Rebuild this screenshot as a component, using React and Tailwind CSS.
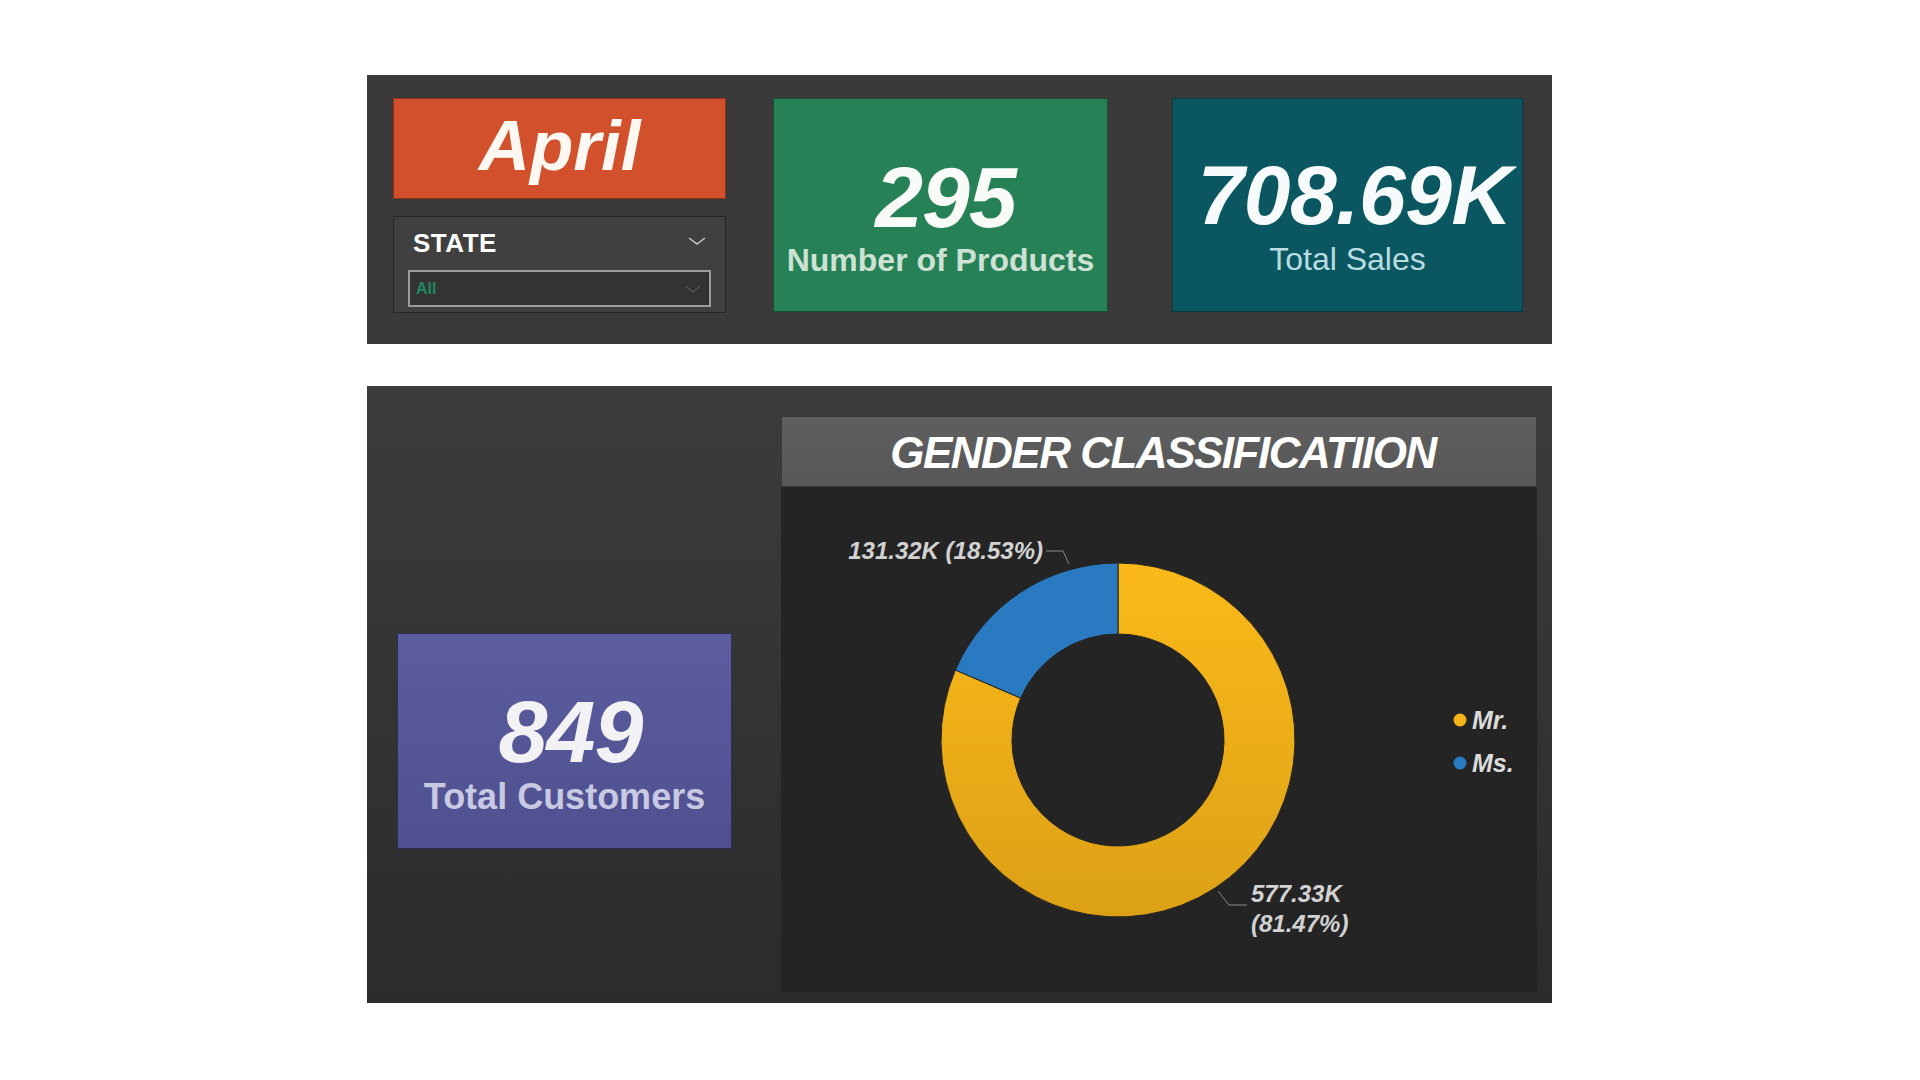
import React from "react";

const FONT = { fontFamily: '"Liberation Sans", Arial, sans-serif' };

// donut geometry (chart body coordinates)
const CX = 337;
const CY = 253;
const R_OUT = 177;
const R_IN = 106;

function polar(r, deg) {
  const a = (deg * Math.PI) / 180;
  return [CX + r * Math.sin(a), CY - r * Math.cos(a)];
}

function ringSlice(start, end) {
  const large = end - start > 180 ? 1 : 0;
  const [x1, y1] = polar(R_OUT, start);
  const [x2, y2] = polar(R_OUT, end);
  const [x3, y3] = polar(R_IN, end);
  const [x4, y4] = polar(R_IN, start);
  return `M${x1} ${y1} A${R_OUT} ${R_OUT} 0 ${large} 1 ${x2} ${y2} L${x3} ${y3} A${R_IN} ${R_IN} 0 ${large} 0 ${x4} ${y4} Z`;
}

function Chevron({ className, color }) {
  return (
    <svg className={className} viewBox="0 0 18 8" fill="none">
      <polyline points="1,1 9,7 17,1" stroke={color} strokeWidth="1.4" />
    </svg>
  );
}

function DonutChart() {
  const msShare = 18.53;
  const blueStart = 360 - msShare * 3.6;

  return (
    <svg width="756" height="505" viewBox="0 0 756 505" className="block">
      <defs>
        <linearGradient id="mrFill" x1="0" y1="0" x2="0" y2="1">
          <stop offset="0%" stopColor="#fbba19" />
          <stop offset="100%" stopColor="#dca016" />
        </linearGradient>
      </defs>

      <path d={ringSlice(0, blueStart)} fill="url(#mrFill)" stroke="#232323" strokeWidth="1" />
      <path d={ringSlice(blueStart, 360)} fill="#2a7ac2" stroke="#232323" strokeWidth="1" />

      {/* leader lines */}
      <polyline points="265,64 282,64 288,77" fill="none" stroke="#8a8a8a" strokeWidth="1" />
      <polyline points="437,404 448,418 466,418" fill="none" stroke="#8a8a8a" strokeWidth="1" />

      <g fill="#d2d2d2" fontStyle="italic" fontWeight="700" fontSize="24" style={FONT}>
        <text x="262" y="72" textAnchor="end">131.32K (18.53%)</text>
        <text x="470" y="415">577.33K</text>
        <text x="470" y="445">(81.47%)</text>
      </g>

      {/* legend */}
      <circle cx="679" cy="233" r="6.5" fill="#f2b418" />
      <circle cx="679" cy="276" r="6.5" fill="#2a7ac2" />
      <g fill="#dcdcdc" fontStyle="italic" fontWeight="700" fontSize="25" style={FONT}>
        <text x="691" y="242">Mr.</text>
        <text x="691" y="285">Ms.</text>
      </g>
    </svg>
  );
}

export default function App() {
  return (
    <div className="min-h-screen w-full bg-white" style={FONT}>
      <div className="flex flex-col gap-[42px] pl-[367px] pt-[75px]">
        {/* top strip */}
        <div className="flex h-[269px] w-[1185px] bg-[#3a3a3a] pl-[26px] pt-[23px]">
          <div className="flex w-[333px] flex-col gap-[17px]">
            <div className="flex h-[101px] items-center justify-center border border-[#8e3219] bg-[#d2502b]">
              <span className="text-[71px] leading-none font-bold italic text-[#fdf8f2] -mt-[6px]">April</span>
            </div>
            <div className="flex h-[97px] flex-col border border-[#262626] bg-[#404040] px-[14px] pt-[13px]">
              <div className="flex items-center justify-between pl-[5px] pr-[5px]">
                <span className="text-[26px] leading-none font-bold text-white tracking-[0.5px]">STATE</span>
                <Chevron className="h-[8px] w-[18px] -mt-[4px]" color="#c8c8c8" />
              </div>
              <div className="mt-[14px] flex h-[37px] items-center justify-between border-2 border-[#9d9d9d] bg-[#333333] pl-[6px] pr-[8px]">
                <span className="text-[16px] font-bold text-[#1f8a5f]">All</span>
                <Chevron className="h-[8px] w-[16px]" color="#5a5a5a" />
              </div>
            </div>
          </div>

          <div className="ml-[47px] flex h-[214px] w-[335px] flex-col items-center border border-[#1c4d33] bg-[#278156] pt-[55px]">
            <span className="pl-[10px] text-[86px] leading-none font-bold italic text-[#f8fbf8] tracking-[-1px]">295</span>
            <span className="mt-[4px] text-[32px] leading-none font-bold text-[#cde2d4]">Number of Products</span>
          </div>

          <div className="ml-[64px] flex h-[214px] w-[351px] flex-col items-center border border-[#083a40] bg-[#0a5661] pt-[54px]">
            <span className="pl-[14px] text-[84px] leading-none font-bold italic text-[#f8fbfb] tracking-[-0.5px]">708.69K</span>
            <span className="mt-[6px] text-[32px] leading-none text-[#b8dde1]">Total Sales</span>
          </div>
        </div>

        {/* bottom strip */}
        <div className="flex h-[617px] w-[1185px] bg-linear-to-b from-[#3c3c3c] to-[#2b2b2b] pl-[30px] pt-[30px]">
          <div className="mt-[217px] flex h-[216px] w-[335px] flex-col items-center border border-[#2c2c55] bg-linear-to-b from-[#5c5d9e] to-[#4f5090] pt-[54px]">
            <span className="pl-[12px] text-[88px] leading-none font-bold italic text-[#f2f2f4] tracking-[-1px]">849</span>
            <span className="mt-[3px] text-[36px] leading-none font-bold text-[#c8c9e2]">Total Customers</span>
          </div>

          <div className="ml-[49px] flex h-[576px] w-[756px] flex-col bg-[#242424]">
            <div className="flex h-[71px] items-center justify-center border border-[#3a3a3a] bg-linear-to-b from-[#5f5f5f] to-[#575757]">
              <span className="mt-[3px] pl-[8px] text-[44px] leading-none font-bold italic text-white tracking-[-1.5px]">
                GENDER CLASSIFICATIION
              </span>
            </div>
            <DonutChart />
          </div>
        </div>
      </div>
    </div>
  );
}
